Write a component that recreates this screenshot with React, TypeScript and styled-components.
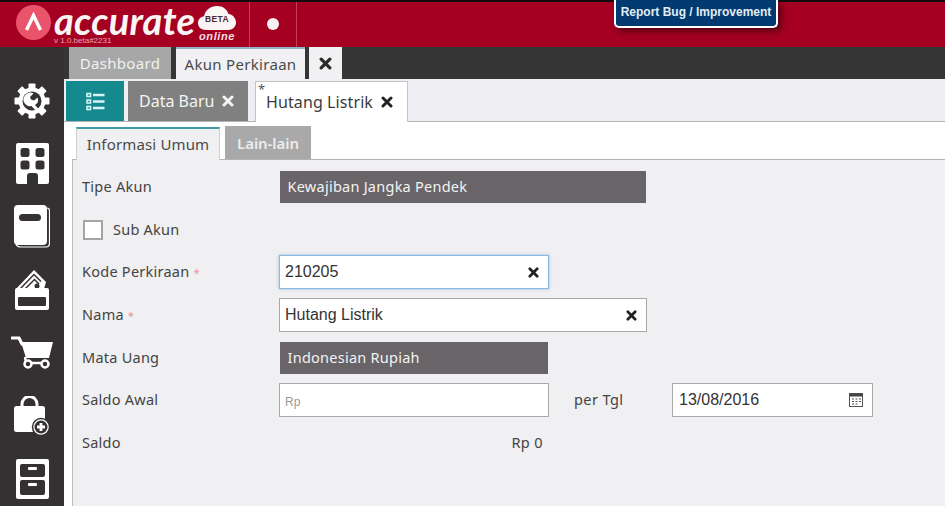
import React from "react";
import styled, { createGlobalStyle } from "styled-components";

const GlobalStyle = createGlobalStyle`
  html, body {
    margin: 0;
    padding: 0;
    height: 100%;
    background: #ffffff;
  }
  * {
    box-sizing: border-box;
  }
`;

const Page = styled.div`
  width: 945px;
  height: 506px;
  overflow: hidden;
  position: relative;
  display: flex;
  flex-direction: column;
  font-family: "Noto Sans", "Open Sans", sans-serif;
  color: #3a3a3a;
`;

const Header = styled.header`
  height: 47px;
  flex-shrink: 0;
  display: flex;
  align-items: stretch;
  background: #a50021;
  border-top: 2px solid #120a0c;
  padding-left: 16px;
`;

const Brand = styled.div`
  width: 233px;
  display: flex;
  align-items: flex-start;
  padding-top: 3px;
`;

const BrandWords = styled.div`
  width: 144px;
  margin-left: 3px;
  display: flex;
  flex-direction: column;
`;

const BrandName = styled.span`
  font-family: "Lato", sans-serif;
  font-style: italic;
  font-weight: 700;
  font-size: 38px;
  line-height: 31px;
  color: #fbf4f5;
  letter-spacing: 0.3px;
  white-space: nowrap;
`;

const Version = styled.span`
  font-family: "Liberation Sans", sans-serif;
  font-size: 8px;
  line-height: 9px;
  color: #e9a6b2;
`;

const Cloud = styled.div`
  width: 38px;
  display: flex;
  flex-direction: column;
  align-items: center;
  position: relative;
`;

const BetaText = styled.span`
  position: absolute;
  top: 9px;
  left: 0;
  right: 0;
  text-align: center;
  font-family: "Liberation Sans", sans-serif;
  font-size: 8.5px;
  line-height: 10px;
  font-weight: 700;
  color: #4a2a30;
  letter-spacing: 0.4px;
`;

const OnlineText = styled.span`
  font-family: "Liberation Sans", sans-serif;
  font-style: italic;
  font-weight: 700;
  font-size: 11px;
  line-height: 10px;
  letter-spacing: 0.6px;
  color: #f7dfe3;
`;

const DotCell = styled.div`
  width: 48px;
  border-left: 1px solid #bd4259;
  border-right: 1px solid #bd4259;
  display: flex;
  align-items: center;
  justify-content: center;
  padding-bottom: 2px;
`;

const Dot = styled.span`
  width: 12px;
  height: 12px;
  border-radius: 50%;
  background: #f6f1f2;
`;

const ReportButton = styled.div`
  position: absolute;
  top: 0;
  left: 614px;
  width: 164px;
  height: 28px;
  padding-top: 5px;
  background: #003a70;
  border: 2px solid #ffffff;
  border-top: none;
  border-radius: 0 0 5px 5px;
  box-shadow: 3px 3px 6px rgba(40, 0, 10, 0.65);
  font-family: "Liberation Sans", sans-serif;
  font-size: 12px;
  line-height: 15px;
  font-weight: 700;
  color: #e4edf4;
  text-align: center;
  white-space: nowrap;
`;

const Body = styled.div`
  flex: 1;
  display: flex;
  min-height: 0;
`;

const Sidebar = styled.nav`
  width: 64px;
  flex-shrink: 0;
  background: #353132;
  padding-top: 22px;
  display: flex;
  flex-direction: column;
  align-items: center;
`;

const SideIcon = styled.div`
  height: 63px;
  flex-shrink: 0;
  display: flex;
  align-items: center;
  justify-content: center;
`;

const Main = styled.main`
  flex: 1;
  min-width: 0;
  display: flex;
  flex-direction: column;
`;

const TopTabs = styled.div`
  height: 32px;
  flex-shrink: 0;
  display: flex;
  align-items: stretch;
  gap: 5px;
  padding-left: 5px;
  background: #353535;
`;

const TopTab = styled.div<{ $active?: boolean }>`
  width: ${(p) => (p.$active ? "129px" : "102px")};
  display: flex;
  align-items: center;
  justify-content: center;
  font-size: 15px;
  letter-spacing: 0.3px;
  background: ${(p) => (p.$active ? "#f1f0f3" : "#a8a7a7")};
  color: ${(p) => (p.$active ? "#4a4a4a" : "#f1f1f1")};
  border-top: ${(p) => (p.$active ? "2px solid #8fb2c6" : "none")};
`;

const TopClose = styled.div`
  width: 33px;
  margin-left: -1px;
  display: flex;
  align-items: center;
  justify-content: center;
  background: #f1f0f3;
  color: #2b2b2b;
`;

const SubTabs = styled.div`
  height: 43px;
  flex-shrink: 0;
  display: flex;
  align-items: flex-end;
  padding-left: 2px;
  background: #efeef2;
  border-bottom: 1px solid #b4b4b6;
`;

const ListTab = styled.div`
  width: 58px;
  height: 40px;
  display: flex;
  align-items: center;
  justify-content: center;
  background: #148a8f;
`;

const DataTab = styled.div`
  width: 120px;
  height: 40px;
  margin-left: 4px;
  display: flex;
  align-items: center;
  gap: 8px;
  padding-left: 11px;
  background: #808080;
  color: #f4f4f4;
  font-size: 16px;
`;

const EditTab = styled.div`
  width: 153px;
  height: 41px;
  margin-left: 7px;
  margin-bottom: -1px;
  position: relative;
  display: flex;
  align-items: center;
  gap: 8px;
  padding-left: 10px;
  background: #ffffff;
  border: 1px solid #c4c4c6;
  border-bottom: none;
  color: #3c3c3c;
  font-size: 16px;
  letter-spacing: 0.1px;
`;

const DirtyMark = styled.span`
  position: absolute;
  left: 2px;
  top: 1px;
  font-size: 13px;
  line-height: 13px;
  color: #555555;
`;

const Panel = styled.div`
  flex: 1;
  min-height: 0;
  display: flex;
  flex-direction: column;
  padding-left: 8px;
  background: #ffffff;
`;

const FormTabs = styled.div`
  height: 38px;
  flex-shrink: 0;
  display: flex;
  align-items: flex-end;
  gap: 5px;
  padding-left: 4px;
  border-bottom: 1px solid #b4b4b6;
`;

const FormTab = styled.div<{ $active?: boolean }>`
  height: 33px;
  display: flex;
  align-items: center;
  justify-content: center;
  width: ${(p) => (p.$active ? "144px" : "86px")};
  margin-bottom: ${(p) => (p.$active ? "-1px" : "0")};
  padding-bottom: ${(p) => (p.$active ? "2px" : "0")};
  font-size: 15px;
  letter-spacing: ${(p) => (p.$active ? "0.15px" : "-0.05px")};
  font-weight: ${(p) => (p.$active ? 400 : 600)};
  background: ${(p) => (p.$active ? "#f0eff2" : "#a9a9a9")};
  color: ${(p) => (p.$active ? "#4a4a4a" : "#ececec")};
  border-top: ${(p) => (p.$active ? "2px solid #3f9ba6" : "none")};
  border-left: ${(p) => (p.$active ? "1px solid #cfcfd2" : "none")};
  border-right: ${(p) => (p.$active ? "1px solid #cfcfd2" : "none")};
`;

const Form = styled.form`
  flex: 1;
  display: grid;
  grid-auto-rows: 42.6px;
  align-content: start;
  padding: 5.95px 0 0 9px;
  background: #f0eff1;
  border-left: 1px solid #bdbdbf;
`;

const Row = styled.div`
  display: flex;
  align-items: center;
  font-size: 14.5px;
  color: #444444;
`;

const Label = styled.label`
  width: 197px;
  flex-shrink: 0;
  padding-bottom: 2px;
  letter-spacing: 0.25px;
`;

const Required = styled.span`
  margin-left: 4px;
  color: #e8939d;
  font-size: 11px;
`;

const ReadOnly = styled.div<{ $w: number }>`
  width: ${(p) => p.$w}px;
  height: 32px;
  margin-left: 1px;
  padding: 0 0 2px 7.5px;
  display: flex;
  align-items: center;
  background: #686468;
  color: #f3f3f3;
  font-size: 14.5px;
  letter-spacing: 0.25px;
`;

const Field = styled.div<{ $w: number; $focus?: boolean; $inset?: number }>`
  width: ${(p) => p.$w}px;
  height: 34px;
  padding: 0 9px 0 ${(p) => p.$inset ?? 5}px;
  display: flex;
  align-items: center;
  justify-content: space-between;
  background: #ffffff;
  border: 1px solid ${(p) => (p.$focus ? "#8ab8e0" : "#a9a9a9")};
  box-shadow: ${(p) => (p.$focus ? "0 0 3px rgba(110, 170, 225, 0.7)" : "none")};
  font-family: "Liberation Sans", sans-serif;
  font-size: 16px;
  color: #333333;
`;

const Placeholder = styled.span`
  font-size: 12px;
  color: #9a9a9a;
  padding-top: 3px;
`;

const CheckBox = styled.span`
  width: 20px;
  height: 20px;
  margin-left: 1px;
  margin-right: 10px;
  background: #ffffff;
  border: 2px solid #a5a5a5;
`;

const PerLabel = styled.span`
  width: 98px;
  margin-left: 25px;
  flex-shrink: 0;
  padding-bottom: 2px;
  font-size: 14.5px;
  letter-spacing: 0.4px;
`;

const SaldoValue = styled.span`
  width: 264px;
  flex-shrink: 0;
  padding-bottom: 1px;
  text-align: right;
  font-size: 14.5px;
  letter-spacing: 0.4px;
`;

function CloseIcon({ size = 12, color = "currentColor" }: { size?: number; color?: string }) {
  return (
    <svg width={size} height={size} viewBox="0 0 12 12" style={{ flexShrink: 0 }}>
      <path d="M2 2 L10 10 M10 2 L2 10" stroke={color} strokeWidth="3" strokeLinecap="round" />
    </svg>
  );
}

function LogoMark() {
  return (
    <svg width="35" height="35" viewBox="0 0 35 35" style={{ flexShrink: 0 }}>
      <circle cx="17.5" cy="17.5" r="17.5" fill="#e9546b" />
      <path d="M10.5 25 L17.5 10.5 L24.5 25" fill="none" stroke="#fff" strokeWidth="3.4" />
    </svg>
  );
}

function CloudShape() {
  return (
    <svg width="38" height="26" viewBox="0 0 38 26">
      <path
        d="M8 25 C2 25 0 21 0 18 C0 14 3 11.5 6 11.5 C7 5 13 1 19 1 C25 1 29 4.5 30.5 9 C35 9.5 38 13.5 38 17.5 C38 22 34.5 25 30 25 Z"
        fill="#fbf4f5"
      />
    </svg>
  );
}

function ListIcon() {
  return (
    <svg width="19" height="19" viewBox="0 0 19 19" fill="none" stroke="#d8f3f4">
      <rect x="1" y="1.5" width="3.5" height="3" strokeWidth="1.6" />
      <rect x="1" y="8" width="3.5" height="3" strokeWidth="1.6" />
      <rect x="1" y="14.5" width="3.5" height="3" strokeWidth="1.6" />
      <path d="M7 3 H18.5 M7 9.5 H18.5 M7 16 H18.5" strokeWidth="2.4" />
    </svg>
  );
}

function CalendarIcon() {
  return (
    <svg width="14" height="14" viewBox="0 0 14 14">
      <rect x="0.5" y="0.5" width="13" height="13" fill="#fff" stroke="#555" />
      <rect x="0.5" y="0.5" width="13" height="3" fill="#444" />
      <path
        d="M3 6 H5 M6.5 6 H8.5 M10 6 H12 M3 8.5 H5 M6.5 8.5 H8.5 M10 8.5 H12 M3 11 H5 M6.5 11 H8.5"
        stroke="#555"
        strokeWidth="1.2"
      />
    </svg>
  );
}

function GearIcon() {
  const teeth = [0, 45, 90, 135, 180, 225, 270, 315];
  return (
    <svg width="36" height="36" viewBox="0 0 36 36">
      {teeth.map((a) => (
        <rect key={a} x="14.5" y="0.5" width="7" height="8" rx="1" fill="#fff" transform={`rotate(${a} 18 18)`} />
      ))}
      <circle cx="18" cy="18" r="13.5" fill="#fff" />
      <circle cx="18" cy="18" r="9.5" fill="#353132" />
      <path
        d="M11 12.5 A6 6 0 0 1 19.5 10.5 L16 14 L17 16.5 L20 17.5 L23.5 14.5 A6 6 0 0 1 21 22 L24.5 26 L22 28 L17.5 23 A6.5 6.5 0 0 1 11 12.5 Z"
        fill="#fff"
      />
    </svg>
  );
}

function BuildingIcon() {
  return (
    <svg width="33" height="41" viewBox="0 0 33 41">
      <rect width="33" height="41" rx="2" fill="#fff" />
      <rect x="4.5" y="5" width="9" height="9" rx="2.5" fill="#353132" />
      <rect x="19.5" y="5" width="9" height="9" rx="2.5" fill="#353132" />
      <rect x="4.5" y="17.5" width="9" height="9" rx="2.5" fill="#353132" />
      <rect x="19.5" y="17.5" width="9" height="9" rx="2.5" fill="#353132" />
      <path d="M11 41 V33 Q11 30 14 30 H19 Q22 30 22 33 V41 Z" fill="#353132" />
    </svg>
  );
}

function BookIcon() {
  return (
    <svg width="36" height="43" viewBox="0 0 36 43">
      <path d="M33 3 Q35.5 3 35.5 6 V38 Q35.5 42 32 42 H7 Q3 42 2 39" fill="none" stroke="#fff" strokeWidth="1.2" />
      <rect x="0" y="0" width="33" height="40" rx="4" fill="#fff" />
      <rect x="5" y="9" width="22" height="7" rx="3.5" fill="#353132" />
    </svg>
  );
}

function WalletIcon() {
  return (
    <svg width="34" height="41" viewBox="0 0 34 41">
      <path d="M1 20 L19 1 L31 13 L29 20 Z" fill="#fff" />
      <path d="M5 20 L19 5.5 L26 12.5 M10 20 L19.5 10.5 L24 15" fill="none" stroke="#353132" strokeWidth="1.5" />
      <circle cx="22" cy="17" r="2.5" fill="#353132" />
      <rect x="0" y="19" width="34" height="22" rx="2" fill="#fff" />
      <rect x="3" y="28" width="28" height="9" rx="1" fill="#353132" />
    </svg>
  );
}

function CartIcon() {
  return (
    <svg width="42" height="33" viewBox="0 0 42 33">
      <path d="M1 2 H8 L11 8" fill="none" stroke="#fff" strokeWidth="3.2" strokeLinecap="round" />
      <path d="M10 6 H42 L38 22 H15 Z" fill="#fff" />
      <path d="M14 21 L15 27 H36" fill="none" stroke="#fff" strokeWidth="2.5" />
      <circle cx="17" cy="28" r="3.5" fill="#353132" stroke="#fff" strokeWidth="2.5" />
      <circle cx="34" cy="28" r="3.5" fill="#353132" stroke="#fff" strokeWidth="2.5" />
    </svg>
  );
}

function BagPlusIcon() {
  return (
    <svg width="36" height="40" viewBox="0 0 36 40">
      <path d="M8 11 V8 A7.5 7.5 0 0 1 23 8 V11" fill="none" stroke="#fff" strokeWidth="3" />
      <rect x="0" y="10" width="31" height="26" rx="2.5" fill="#fff" />
      <circle cx="27" cy="31" r="8.5" fill="#fff" stroke="#353132" strokeWidth="1.5" />
      <circle cx="27" cy="31" r="6.5" fill="#353132" />
      <path d="M27 27 V35 M23 31 H31" stroke="#fff" strokeWidth="2.8" />
    </svg>
  );
}

function CabinetIcon() {
  return (
    <svg width="33" height="40" viewBox="0 0 33 40">
      <rect width="33" height="40" rx="2" fill="#fff" />
      <rect x="4" y="5" width="25" height="13" rx="2" fill="#353132" />
      <rect x="4" y="21" width="25" height="15" rx="2" fill="#353132" />
      <rect x="12" y="8" width="9" height="3" rx="1" fill="#fff" />
      <rect x="12" y="24" width="9" height="3" rx="1" fill="#fff" />
    </svg>
  );
}

const sideIcons = [GearIcon, BuildingIcon, BookIcon, WalletIcon, CartIcon, BagPlusIcon, CabinetIcon];

export default function App() {
  return (
    <Page>
      <GlobalStyle />
      <Header>
        <Brand>
          <LogoMark />
          <BrandWords>
            <BrandName>accurate</BrandName>
            <Version>v 1.0.beta#2231</Version>
          </BrandWords>
          <Cloud>
            <CloudShape />
            <BetaText>BETA</BetaText>
            <OnlineText>online</OnlineText>
          </Cloud>
        </Brand>
        <DotCell>
          <Dot />
        </DotCell>
      </Header>
      <ReportButton>Report Bug / Improvement</ReportButton>

      <Body>
        <Sidebar>
          {sideIcons.map((Icon, i) => (
            <SideIcon key={i}>
              <Icon />
            </SideIcon>
          ))}
        </Sidebar>

        <Main>
          <TopTabs>
            <TopTab>Dashboard</TopTab>
            <TopTab $active>Akun Perkiraan</TopTab>
            <TopClose>
              <CloseIcon size={13} />
            </TopClose>
          </TopTabs>

          <SubTabs>
            <ListTab>
              <ListIcon />
            </ListTab>
            <DataTab>
              Data Baru
              <CloseIcon size={12} />
            </DataTab>
            <EditTab>
              <DirtyMark>*</DirtyMark>
              Hutang Listrik
              <CloseIcon size={12} color="#222" />
            </EditTab>
          </SubTabs>

          <Panel>
            <FormTabs>
              <FormTab $active>Informasi Umum</FormTab>
              <FormTab>Lain-lain</FormTab>
            </FormTabs>
            <Form>
              <Row>
                <Label>Tipe Akun</Label>
                <ReadOnly $w={366}>Kewajiban Jangka Pendek</ReadOnly>
              </Row>
              <Row>
                <CheckBox />
                <Label>Sub Akun</Label>
              </Row>
              <Row>
                <Label>
                  Kode Perkiraan<Required>*</Required>
                </Label>
                <Field $w={270} $focus>
                  210205
                  <CloseIcon size={11} color="#222" />
                </Field>
              </Row>
              <Row>
                <Label>
                  Nama<Required>*</Required>
                </Label>
                <Field $w={368}>
                  Hutang Listrik
                  <CloseIcon size={11} color="#222" />
                </Field>
              </Row>
              <Row>
                <Label>Mata Uang</Label>
                <ReadOnly $w={268}>Indonesian Rupiah</ReadOnly>
              </Row>
              <Row>
                <Label>Saldo Awal</Label>
                <Field $w={270}>
                  <Placeholder>Rp</Placeholder>
                </Field>
                <PerLabel>per Tgl</PerLabel>
                <Field $w={201} $inset={6}>
                  13/08/2016
                  <CalendarIcon />
                </Field>
              </Row>
              <Row>
                <Label>Saldo</Label>
                <SaldoValue>Rp 0</SaldoValue>
              </Row>
            </Form>
          </Panel>
        </Main>
      </Body>
    </Page>
  );
}
